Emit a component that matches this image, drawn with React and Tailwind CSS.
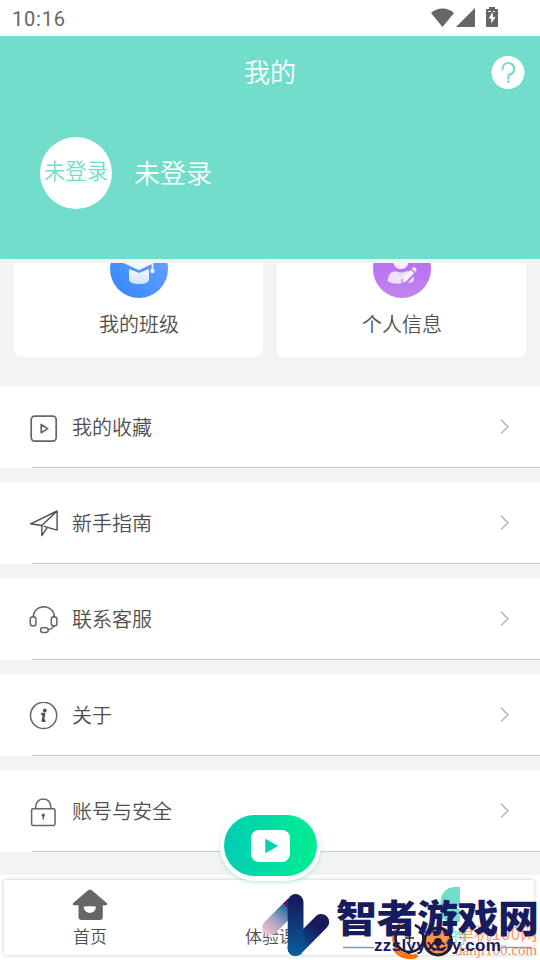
import React from "react";

const stroke = { fill: "none", stroke: "#666", strokeWidth: 1.5, strokeLinejoin: "round", strokeLinecap: "round" };

const FavoriteIcon = () => (
  <svg width="30" height="30" viewBox="0 0.5 30 30" {...stroke} strokeWidth="1.7">
    <rect x="2.2" y="2.6" width="25" height="25" rx="3.6" />
    <path d="M12.2 11v8.2l6.6-4.1z" />
  </svg>
);
const GuideIcon = () => (
  <svg width="30" height="30" viewBox="0 1 30 30" {...stroke} stroke="#505050" strokeWidth="1.4">
    <path d="M1.6 14.8 28.1 2v19.1l-13-3.7M1.6 14.8l11.200 1.700L28.100 2M12.800 16.500v10.100l5.400-8" />
  </svg>
);
const ServiceIcon = () => (
  <svg width="30" height="30" viewBox="0 1.5 30 30" {...stroke}>
    <path d="M4.3 12.5C4.3 6.2 9 2.2 14.8 2.2s10.5 4 10.5 10.300M24.800 21.600c-1.400 2.200-3.300 3.500-5.500 3.900" />
    <rect x="1.3" y="12.3" width="5.6" height="9.3" rx="2.5" />
    <rect x="22.3" y="12.3" width="5.6" height="9.3" rx="2.5" />
    <rect x="11.6" y="23.2" width="7.6" height="4.8" rx="2.2" />
  </svg>
);
const AboutIcon = () => (
  <svg width="30" height="30" viewBox="0 2.2 30 30" {...stroke}>
    <circle cx="14.6" cy="15.6" r="13.1" />
    <circle cx="15.8" cy="10.700" r="1.9" fill="#505050" stroke="none" />
    <path d="M12.2 14.2h3l-1.500 6.700h2.700" stroke="#505050" strokeWidth="2.4" strokeLinecap="butt" />
  </svg>
);
const LockIcon = () => (
  <svg width="30" height="30" viewBox="0 1.7 30 30" {...stroke}>
    <rect x="2.6" y="12.4" width="23.4" height="16.8" rx="1.4" />
    <path d="M6.5 12.2C6.8 5.8 9.7 2.6 14.3 2.6s7.500 3.200 7.800 9.600" />
    <circle cx="14.3" cy="18.9" r="1.7" fill="#666" stroke="none" />
    <path d="M14.3 19v3.7" />
  </svg>
);

const rows = [
  ["我的收藏", FavoriteIcon],
  ["新手指南", GuideIcon],
  ["联系客服", ServiceIcon],
  ["关于", AboutIcon],
  ["账号与安全", LockIcon],
];

function MenuRow({ label, Icon }) {
  return (
    <div className="flex h-[82px] flex-col bg-white">
      <div className="flex flex-1 items-center pl-[29px] pr-[30px]">
        <div className="mt-1"><Icon /></div>
        <span className="ml-[13px] flex-1 text-[20px] leading-[30px] text-[#4f4f4f]">{label}</span>
        <svg width="11" height="16" viewBox="-0.6 0.4 11 16" fill="none" stroke="#b7b7b7" strokeWidth="1.5">
          <path d="M1.5 1.3 8.4 8.1 1.5 14.9" />
        </svg>
      </div>
      <div className="ml-8 h-px bg-[#cacdcc]" />
    </div>
  );
}

function ClassIcon() {
  return (
    <svg width="58" height="35" viewBox="0 23 58 35">
      <defs>
        <linearGradient id="blue" x1="0" y1="1" x2="1" y2="0"><stop stopColor="#3186ff" /><stop offset="1" stopColor="#70a5ff" /></linearGradient>
        <linearGradient id="pale" x1="0" y1="0" x2="0" y2="1"><stop stopColor="#f7faff" /><stop offset="1" stopColor="#cfe1ff" /></linearGradient>
      </defs>
      <circle cx="29" cy="29" r="29" fill="url(#blue)" />
      <path d="M8 20.500 29 12l20 8.500-20 9.700z" fill="#f2f7ff" />
      <path d="M19 30.500c0-1.300.7-1.500 1.600-1l8.400 3.600 8.500-3.600c1-.5 1.500-.2 1.500 1v9.200c0 5.700-20 5.700-20 0z" fill="url(#pale)" />
      <path d="M42.500 22v9" stroke="#eaf2ff" strokeWidth="1.800" />
      <circle cx="42.500" cy="31" r="2.200" fill="#eaf2ff" />
    </svg>
  );
}

function PersonIcon() {
  return (
    <svg width="58" height="35" viewBox="0 23 58 35">
      <defs>
        <linearGradient id="violet" x1="0" y1="0" x2="0" y2="1"><stop stopColor="#b463f5" /><stop offset="1" stopColor="#c286ee" /></linearGradient>
      </defs>
      <circle cx="29" cy="29" r="29" fill="url(#violet)" />
      <circle cx="27.8" cy="21.6" r="7.5" fill="#faf3ff" />
      <path d="M14.700 41c.3-7 4.300-10 8.100-9.800 3.800 1.700 7 1.700 10.800 0h3.200l-8.500 8.800V43.600c-7.200.2-11.300-.3-13.600-2.600z" fill="#f0e0ff" />
      <path d="m29.500 42.500.5-4.800 7.700-8 3.500 3.200-8 8.300zM38.800 28.600l1.200-1.200c1.700-1 4.600 1.500 3.300 3.400l-1.200 1.300z" fill="#faf3ff" />
      <path d="m40.600 36.500-6.200 6.400 5.300-.7c1.300-1.500 1.500-3.700.9-5.700z" fill="#ecdcfb" />
    </svg>
  );
}

function Card({ label, children }) {
  return (
    <div className="flex h-[94px] flex-1 flex-col items-center rounded-b-[7px] bg-white">
      {children}
      <span className="ml-px mt-[11px] text-[20px] leading-[30px] text-[#4f4f4f]">{label}</span>
    </div>
  );
}

function Watermark() {
  return (
    <div className="absolute bottom-0 left-[260px] h-[80px] w-[280px] overflow-hidden">
      <span className="absolute left-[189px] top-[44px] text-[17px] leading-[24px] text-[#72ddca]">的</span>
      <svg className="absolute inset-0" width="280" height="80" viewBox="260 880 280 80">
        <defs>
          <linearGradient id="arm" gradientUnits="userSpaceOnUse" x1="264" y1="934" x2="292" y2="902"><stop offset=".05" stopColor="#f4bfcb" /><stop offset=".45" stopColor="#9c9fc0" /><stop offset=".85" stopColor="#1d659d" /></linearGradient>
          <linearGradient id="stem" gradientUnits="userSpaceOnUse" x1="0" y1="895" x2="0" y2="956"><stop offset=".1" stopColor="#171b5c" /><stop offset="1" stopColor="#07609f" /></linearGradient>
          <linearGradient id="rise" gradientUnits="userSpaceOnUse" x1="295" y1="950" x2="324" y2="920"><stop stopColor="#07609f" /><stop offset=".75" stopColor="#171b5c" /></linearGradient>
        </defs>
        <path d="M455 887h5v19h-19c-2-10 4-19 14-19zM440 909h20v13h-8c-8 0-12-6-12-13z" fill="#72ddca" />
        <path d="M343 947.500h31M501 947.500h31" stroke="#79a0be" strokeWidth="1.400" />
        <path d="m270 927.500 22-22" fill="none" stroke="url(#arm)" strokeWidth="15.500" strokeLinecap="round" />
        <path d="m283.300 903.500 5-5v10z" fill="#850080" />
        <path d="m295.500 948 25.700-26" fill="none" stroke="url(#rise)" strokeWidth="16" strokeLinecap="round" />
        <path d="M287.700 902a7.900 7.900 0 0 1 15.800 0v38l-2 14q-3 2-6 2-7.800-.6-7.800-8z" fill="url(#stem)" />
        <path d="M410 921c-14-1-18 12-16 22 2 8 9 13 23 13-8 3-18 2-23-7" fill="none" stroke="#ff6c0a" strokeWidth="2.500" />
        <path d="M405 955q6 4 12 0" fill="none" stroke="#ff6c0a" strokeWidth="4" />
        <circle cx="409.500" cy="938" r="14" fill="none" stroke="#201b27" strokeWidth="2.600" strokeDasharray="66 5" />
        <path d="M405 938h9M409.500 933.500v9" stroke="#292331" strokeWidth="1.400" />
        <circle cx="438" cy="941.500" r="13.500" fill="#ff934c" stroke="#261d24" strokeWidth="3" />
        <circle cx="438" cy="942" r="4" fill="#281822" />
        <path d="M430 947q8 5 16 0" fill="none" stroke="#281822" strokeWidth="2" />
      </svg>
      <span className="absolute left-[197px] top-[41px] whitespace-nowrap text-[17px] font-normal leading-[24px] tracking-[0.2px] text-[#ff7b43] opacity-75">单机100网</span>
      <span className="absolute left-[195px] top-[60px] whitespace-nowrap font-['Liberation_Serif',serif] text-[15px] font-normal leading-[20px] text-[#f48b5e]">danji100.com</span>
      <span className="absolute left-[76px] top-[9px] origin-top scale-y-[0.92] whitespace-nowrap font-['Noto_Sans_CJK_SC',sans-serif] text-[41px] font-black leading-[58px] tracking-[-0.5px] text-[#171b60]">智者游戏网</span>
      <span className="absolute left-[114px] top-[56px] whitespace-nowrap font-['Liberation_Sans',sans-serif] text-[17px] font-bold leading-[20px] tracking-[0.34px] text-[#171b60]">zzslyyxcfy.com</span>
    </div>
  );
}

export default function App() {
  return (
    <div className="relative flex h-[960px] w-[540px] flex-col overflow-hidden bg-[#f2f4f3] font-['Noto_Sans_CJK_SC',sans-serif] font-[350]">
      <div className="flex h-9 shrink-0 justify-between bg-white pl-3 pr-[41px]">
        <span className="pt-[7px] font-['Roboto',sans-serif] text-[20px] font-[450] leading-[24px] tracking-[0.8px] text-[#666]">10:16</span>
        <svg width="69" height="36" viewBox="430 0 69 36" fill="#666">
          <path d="M431 13c6-6 17-6 23 0l-11.500 14zM475 8v19h-19z" />
          <path fillRule="evenodd" d="M489 9V7h6v2h2q1 0 1 1v16q0 1-1 1h-10q-1 0-1-1V10q0-1 1-1zm-1 2v1h3v-1zm5 0v1h2v-1zm-.5 1-3.800 6.500h2.500v5l4.400-6.500H493z" />
        </svg>
      </div>
      <header className="flex h-[223px] shrink-0 flex-col bg-[#72ddca]">
        <div className="flex h-[72px] items-center justify-between pr-[15px]">
          <div className="w-[49px]" />
          <h1 className="-mt-[2px] text-[26px] font-[350] leading-[36px] text-white">我的</h1>
          <svg width="34" height="34" viewBox="0 0 34 34">
            <circle cx="17" cy="17.500" r="16.500" fill="#fff" />
            <path d="M11.400 14.500C11.500 10.400 14 8 17.300 8s6 2.400 6 5.700-2.500 5.300-4.600 5.800q-1.300.4-1.300 1.800v2.400" fill="none" stroke="#72ddca" strokeWidth="2.200" strokeLinecap="round" />
            <circle cx="17.400" cy="26.700" r="1.400" fill="#72ddca" />
          </svg>
        </div>
        <div className="mt-[29px] flex items-center pl-10">
          <div className="flex h-[72px] w-[72px] items-center justify-center rounded-full bg-white pb-[6px]">
            <span className="whitespace-nowrap text-[21.4px] leading-[30px] text-[#72ddca]">未登录</span>
          </div>
          <span className="-mt-[2px] ml-[22px] text-[26px] leading-[38px] text-white">未登录</span>
        </div>
      </header>
      <div className="mt-1 flex shrink-0 gap-[14px] px-[14px]">
        <Card label="我的班级"><ClassIcon /></Card>
        <Card label="个人信息"><PersonIcon /></Card>
      </div>
      <div className="mt-[29px] flex shrink-0 flex-col gap-[14px]">
        {rows.map(([label, Icon]) => <MenuRow key={label} label={label} Icon={Icon} />)}
      </div>
      <nav className="mt-[23px] flex h-[85px] shrink-0 bg-white pl-1 pr-[6px] pt-[5px]">
        <div className="flex h-[75px] flex-1 bg-white shadow-[0_0_4px_rgba(0,0,0,0.22)]">
          <div className="flex w-[172px] flex-col items-center pt-[9px]">
            <svg width="36" height="32" viewBox="0 0 36 32">
              <path fillRule="evenodd" d="M16.200 1.200q1.800-1.400 3.600 0l15 12.800q1.300 2-1 2.300h-3V28q0 3-3 3H9.500q-3 0-3-3V16.300H2q-2.200-.3-.8-2.300zM12.800 17.500q-1.400 0-1 1.500c1.800 6.500 10.500 6.500 12 0q.5-1.500-1-1.500c-3-.5-7-.5-10 0z" fill="#666" />
            </svg>
            <span className="mt-[3px] text-[17px] leading-[24px] text-[#4f4f4f]">首页</span>
          </div>
          <div className="flex flex-1 flex-col items-center pl-[3px] pt-[44px]">
            <span className="text-[17px] leading-[24px] text-[#4f4f4f]">体验课</span>
          </div>
          <div className="w-[172px]" />
        </div>
      </nav>
      <button className="absolute left-[220px] top-[811px] flex h-[70px] w-[101px] items-center justify-center rounded-[36px] border-4 border-b-[5px] border-white bg-white shadow-[0_2px_4px_rgba(80,210,170,0.35)]">
        <span className="flex h-[61px] w-[93px] items-center justify-center rounded-[32px] bg-gradient-to-r from-[#00cdb3] to-[#00ed91]">
          <span className="flex h-8 w-[39px] items-center justify-center rounded-[8px] bg-white">
            <svg width="14" height="16" viewBox="-0.8 0 14 16"><path d="M1 1.500v13L12.500 8z" fill="#00d4ae" stroke="#00d4ae" strokeLinejoin="round" /></svg>
          </span>
        </span>
      </button>
      <Watermark />
    </div>
  );
}
